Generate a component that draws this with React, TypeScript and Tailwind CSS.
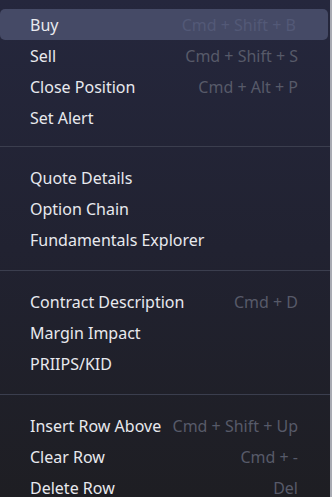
import React from "react";

type Item = { label: string; shortcut?: string; active?: boolean };

const sections: Item[][] = [
  [
    { label: "Buy", shortcut: "Cmd + Shift + B", active: true },
    { label: "Sell", shortcut: "Cmd + Shift + S" },
    { label: "Close Position", shortcut: "Cmd + Alt + P" },
    { label: "Set Alert" },
  ],
  [
    { label: "Quote Details" },
    { label: "Option Chain" },
    { label: "Fundamentals Explorer" },
  ],
  [
    { label: "Contract Description", shortcut: "Cmd + D" },
    { label: "Margin Impact" },
    { label: "PRIIPS/KID" },
  ],
  [
    { label: "Insert Row Above", shortcut: "Cmd + Shift + Up" },
    { label: "Clear Row", shortcut: "Cmd + -" },
    { label: "Delete Row", shortcut: "Del" },
  ],
];

export default function App() {
  return (
    <div
      className="w-[332px] h-[497px] overflow-hidden bg-gradient-to-b from-[#25273d] via-[#212231] to-[#1e1e23] border-r-2 border-[#a9abb3] text-[16px]"
      style={{ fontFamily: '"Noto Sans", "Open Sans", sans-serif' }}
    >
      {sections.map((sec, i) => (
        <div key={i}>
          {i > 0 && <div className="h-px bg-[#3b3e4e]" />}
          <div className={i === 0 ? "pt-[9px] pb-[13px]" : "py-[15px]"}>
            {sec.map((it) => (
              <div
                key={it.label}
                className={
                  "flex items-center justify-between pl-[30px] pr-[32px] h-[31px] whitespace-nowrap " +
                  (it.active ? "bg-[#454a66] rounded-[5px] mr-[2px]" : "")
                }
              >
                <span className="text-[#e8e9ee]">{it.label}</span>
                {it.shortcut && (
                  <span className={it.active ? "text-[#535977]" : "text-[#575a69]"}>
                    {it.shortcut}
                  </span>
                )}
              </div>
            ))}
          </div>
        </div>
      ))}
    </div>
  );
}
